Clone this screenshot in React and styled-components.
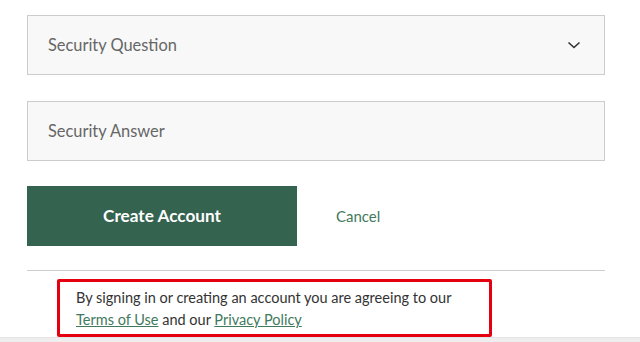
import React from "react";
import styled, { createGlobalStyle } from "styled-components";

const Global = createGlobalStyle`
  html, body {
    margin: 0;
    padding: 0;
    background: #fff;
    font-family: Lato, "Liberation Sans", sans-serif;
    overflow: hidden;
  }
`;

const Page = styled.div`
  width: 640px;
  height: 342px;
  display: flex;
  flex-direction: column;
  position: relative;
`;

const Form = styled.div`
  width: 578px;
  margin: 15px 0 0 27px;
  display: flex;
  flex-direction: column;
`;

const Field = styled.div`
  box-sizing: border-box;
  height: 60px;
  border: 1px solid #cccccc;
  background: #f8f8f8;
  display: flex;
  align-items: center;
  justify-content: space-between;
  padding: 0 23px 1px 20px;
  margin-bottom: ${({ gap }) => gap || 0}px;
  font-size: 16.4px;
  color: #666;
`;

const Actions = styled.div`
  display: flex;
  align-items: center;
  margin-bottom: 24px;
`;

const Primary = styled.button`
  width: 270px;
  height: 60px;
  border: none;
  background: #346350;
  color: #fff;
  font-family: Lato, "Liberation Sans", sans-serif;
  font-weight: 700;
  font-size: 17.2px;
  padding: 0 0 2px;
  cursor: pointer;
`;

const TextLink = styled.a`
  margin-left: 39px;
  font-size: 15px;
  color: #3f7a5c;
  cursor: pointer;
`;

const Divider = styled.hr`
  margin: 0;
  border: none;
  border-top: 1px solid #cccccc;
`;

const Notice = styled.div`
  margin: 8px 0 0 30px;
  width: 435px;
  box-sizing: border-box;
  border: 3px solid #e5000f;
  border-radius: 2px;
  padding: 5px 16px 3px;
  font-size: 14.5px;
  line-height: 22px;
  color: #333;
`;

const Underlined = styled.a`
  color: #3f7a5c;
  text-decoration: underline;
`;

const FooterEdge = styled.div`
  position: absolute;
  left: 0;
  right: 0;
  bottom: 0;
  height: 4px;
  background: #eeeeee;
  border-top: 1px solid #e4e4e4;
`;

const Chevron = () => (
  <svg width="14" height="8" viewBox="0 0 14 8" fill="none">
    <path d="M1.5 1.5 L7 6.5 L12.5 1.5" stroke="#333" strokeWidth="1.6" />
  </svg>
);

export default function App() {
  return (
    <Page>
      <Global />
      <Form>
        <Field gap={26}>
          <span>Security Question</span>
          <Chevron />
        </Field>
        <Field gap={25}>
          <span>Security Answer</span>
        </Field>
        <Actions>
          <Primary>Create Account</Primary>
          <TextLink>Cancel</TextLink>
        </Actions>
        <Divider />
        <Notice>
          By signing in or creating an account you are agreeing to our{" "}
          <Underlined>Terms of Use</Underlined> and our{" "}
          <Underlined>Privacy Policy</Underlined>
        </Notice>
      </Form>
      <FooterEdge />
    </Page>
  );
}
